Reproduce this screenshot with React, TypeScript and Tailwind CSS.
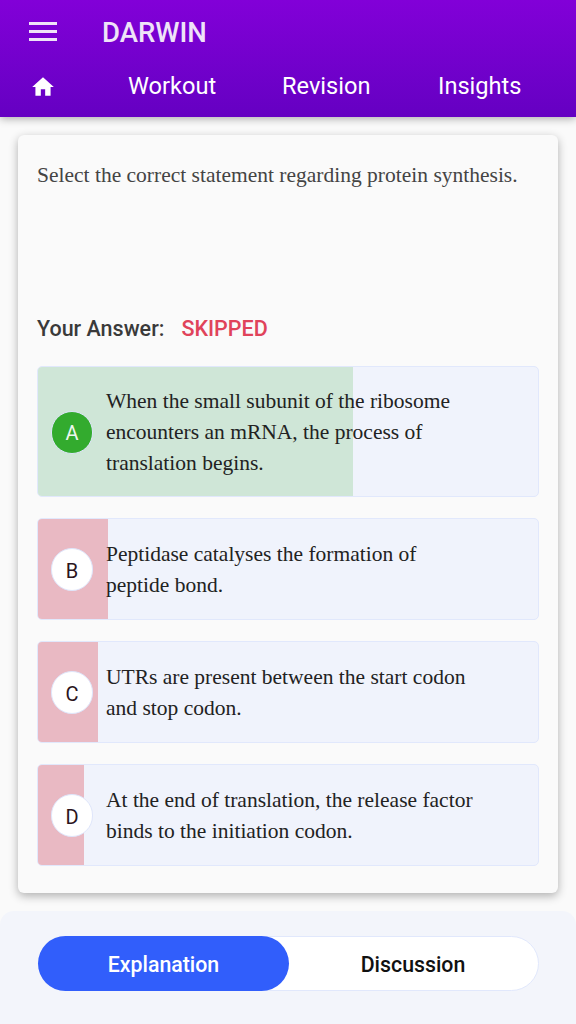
import React from 'react';

const options = [
  { key: 'A', text: 'When the small subunit of the ribosome encounters an mRNA, the process of translation begins.', fill: 'w-[315px] bg-[#cfe6d7]', correct: true },
  { key: 'B', text: 'Peptidase catalyses the formation of peptide bond.', fill: 'w-[70px] bg-[#e9b9c3]', correct: false },
  { key: 'C', text: 'UTRs are present between the start codon and stop codon.', fill: 'w-[60px] bg-[#e9b9c3]', correct: false },
  { key: 'D', text: 'At the end of translation, the release factor binds to the initiation codon.', fill: 'w-[46px] bg-[#e9b9c3]', correct: false },
];

const Option = ({ item }: { item: (typeof options)[number] }) => (
  <div className="relative flex items-center min-h-[102px] pt-[18px] pb-[17px] rounded-[5px] border border-[#e1e8fc] bg-[#f0f3fc] overflow-hidden">
    <div className={`absolute left-0 top-0 bottom-0 ${item.fill}`} />
    <div
      className={`relative ml-[13px] w-[42px] h-[43px] pt-[2px] shrink-0 rounded-full border border-[#dfe6fb] flex items-center justify-center text-[20px] ${
        item.correct ? 'bg-[#33ab2e] text-[#eef7ee]' : 'bg-white text-[#2b1420]'
      }`}
    >
      {item.key}
    </div>
    <p className="relative ml-[13px] w-[372px] pt-[1px] font-['Liberation_Serif',serif] text-[21.5px] leading-[31px] text-[#222]">
      {item.text}
    </p>
  </div>
);

export default function App() {
  return (
    <div className="w-[576px] h-[1024px] flex flex-col bg-[#fafafa] font-['Roboto',sans-serif] overflow-hidden">
      <header className="h-[117px] shrink-0 bg-gradient-to-b from-[#8200d8] to-[#6500c2] shadow-[0_2px_8px_rgba(0,0,0,0.3)] relative z-10">
        <div className="h-[63px] flex items-center pl-[29px]">
          <div className="w-[28px] flex flex-col gap-[5px]">
            <span className="h-[3px] bg-[#efe3f8]" />
            <span className="h-[3px] bg-[#efe3f8]" />
            <span className="h-[3px] bg-[#efe3f8]" />
          </div>
          <span className="ml-[45px] pt-[2px] text-[27.5px] font-medium text-[#efe3f8]">DARWIN</span>
        </div>
        <nav className="h-[46px] pt-[1px] flex items-center text-[23.6px] text-white">
          <svg viewBox="0 0 24 24" className="ml-[30px] w-[26px] h-[26px] fill-white">
            <path d="M10 20v-6h4v6h5v-8h3L12 3 2 12h3v8z" />
          </svg>
          <span className="ml-[72px] w-[154px]">Workout</span>
          <span className="w-[156px]">Revision</span>
          <span>Insights</span>
        </nav>
      </header>

      <main className="mt-[18px] mx-[18px] h-[758px] shrink-0 rounded-[6px] bg-[#fafafa] shadow-[0_3px_10px_rgba(0,0,0,0.3)] px-[19px]">
        <p className="pt-[25px] h-[174px] font-['Liberation_Serif',serif] text-[21.5px] leading-[30px] text-[#444]">
          Select the correct statement regarding protein synthesis.
        </p>
        <div className="mt-[5px] flex text-[21.5px] font-medium leading-[30px]">
          <span className="text-[#3a3a3a]">Your Answer:</span>
          <span className="ml-[17px] text-[#e0435a]">SKIPPED</span>
        </div>
        <div className="mt-[22px] flex flex-col gap-[21px]">
          {options.map((item) => (
            <Option key={item.key} item={item} />
          ))}
        </div>
      </main>

      <footer className="mt-[18px] flex-1 rounded-t-[14px] bg-[#f3f5fb] px-[38px] pt-[25px]">
        <div className="h-[55px] w-[501px] flex rounded-full bg-white border border-[#e1e8fc] text-[21.3px] font-medium">
          <div className="w-[251px] -m-px pt-[3px] rounded-full bg-[#315efb] text-white flex items-center justify-center">Explanation</div>
          <div className="flex-1 pt-[3px] text-[#111] flex items-center justify-center">Discussion</div>
        </div>
      </footer>
    </div>
  );
}
